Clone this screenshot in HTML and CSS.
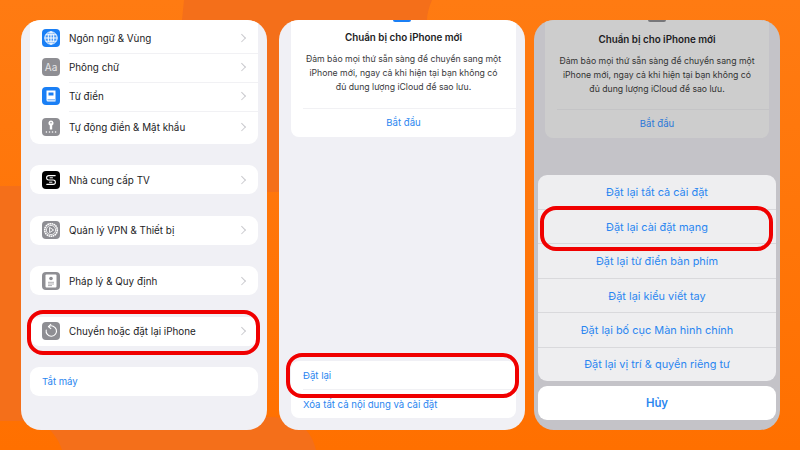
FILE: index.html
```html
<!DOCTYPE html>
<html>

<head>
    <title>Đặt lại cài đặt mạng</title>
    <meta name="viewport" content="width=device-width, initial-scale=1.0">
    <link rel="stylesheet" href="styles.css">
</head>

<body>
    <!-- Darker orange shapes behind the phones -->
    <svg class="backdrop" viewBox="0 0 800 450">
        <path d="M184 0H432C429 7 427 14 427 20V60H279V192H267V60H178Z" fill="#f46f1a"/>
        <path d="M0 186H30V421H0Z" fill="#f46f1a"/>
        <path d="M30 421H40C52 430 59 440 62 450H316C312 432 300 417 270 417H30Z" fill="#f46f1a"/>
    </svg>

    <main class="screens">
        <!-- Settings list -->
        <section class="phone">
            <div class="group group-first">
                <div class="row">
                    <span class="icon icon-blue">
                        <svg viewBox="0 0 18 18" fill="none" stroke="#fff" stroke-width="1">
                            <circle cx="9" cy="9" r="6.2" fill="#cfe3ff" fill-opacity=".25"/>
                            <ellipse cx="9" cy="9" rx="2.8" ry="6.2"/>
                            <path d="M9 2.8V15.2M2.8 9H15.2M3.8 5.8H14.2M3.8 12.2H14.2"/>
                        </svg>
                    </span>
                    <span class="label">Ngôn ngữ &amp; Vùng</span>
                    <span class="chevron"></span>
                </div>
                <div class="row">
                    <span class="icon icon-gray icon-text">Aa</span>
                    <span class="label">Phông chữ</span>
                    <span class="chevron"></span>
                </div>
                <div class="row">
                    <span class="icon icon-blue">
                        <svg viewBox="0 0 18 18">
                            <path d="M4.5 3.5H13.5V14.5H6A1.5 1.5 0 0 1 4.5 13Z" fill="#fff"/>
                            <path d="M6.5 5.5H11.5V8.5H6.5ZM5.5 12.5H13V13.3H5.5Z" fill="#1a7ff5"/>
                        </svg>
                    </span>
                    <span class="label">Từ điển</span>
                    <span class="chevron"></span>
                </div>
                <div class="row row-tall">
                    <span class="icon icon-gray">
                        <svg viewBox="0 0 18 18" fill="#fff">
                            <path d="M9 2.5A2.6 2.6 0 0 1 10.2 7.4V11.5H7.8V7.4A2.6 2.6 0 0 1 9 2.5Z"/>
                            <circle cx="9" cy="4.8" r=".8" fill="#8e8e93"/>
                            <circle cx="4.4" cy="14" r=".8"/>
                            <circle cx="7.5" cy="14" r=".8"/>
                            <circle cx="10.5" cy="14" r=".8"/>
                            <circle cx="13.6" cy="14" r=".8"/>
                        </svg>
                    </span>
                    <span class="label">Tự động điền &amp; Mật khẩu</span>
                    <span class="chevron"></span>
                </div>
            </div>

            <div class="group">
                <div class="row">
                    <span class="icon icon-black">
                        <svg viewBox="0 0 18 18" fill="none" stroke="#fff" stroke-linecap="round">
                            <path d="M13.2 4.6H6.8A2.2 2.2 0 0 0 6.8 9H11.2A2.2 2.2 0 0 1 11.2 13.4H4.8" stroke-width="1.1"/>
                            <path d="M8 6.8H10.5M7.5 11.2H10" stroke-width="1"/>
                        </svg>
                    </span>
                    <span class="label">Nhà cung cấp TV</span>
                    <span class="chevron"></span>
                </div>
            </div>

            <div class="group">
                <div class="row">
                    <span class="icon icon-gray">
                        <svg viewBox="0 0 18 18" fill="none" stroke="#fff">
                            <circle cx="9" cy="9" r="6.3" stroke-width="1.6" stroke-dasharray="1.6 .5"/>
                            <circle cx="9" cy="9" r="4.6" stroke-width=".8"/>
                            <path d="M7.6 6.4L11.6 9L7.6 11.6Z" stroke-width=".9" stroke-linejoin="round"/>
                        </svg>
                    </span>
                    <span class="label">Quản lý VPN &amp; Thiết bị</span>
                    <span class="chevron"></span>
                </div>
            </div>

            <div class="group">
                <div class="row">
                    <span class="icon icon-gray">
                        <svg viewBox="0 0 18 18">
                            <rect x="3.5" y="2.5" width="11" height="13" rx="1" fill="#fff"/>
                            <circle cx="9" cy="6.5" r="1.8" fill="#8e8e93"/>
                            <path d="M6 10.3H12M6 12H12M6 13.6H10" stroke="#8e8e93" stroke-width=".7"/>
                        </svg>
                    </span>
                    <span class="label">Pháp lý &amp; Quy định</span>
                    <span class="chevron"></span>
                </div>
            </div>

            <div class="group">
                <div class="row">
                    <span class="icon icon-gray">
                        <svg viewBox="0 0 18 18" fill="none" stroke="#fff" stroke-width="1.1" stroke-linecap="round" stroke-linejoin="round">
                            <path d="M6.6 4.6A5.2 5.2 0 1 1 4.2 8"/>
                            <path d="M8.8 2.4L6.4 4.6L8.8 6.6"/>
                        </svg>
                    </span>
                    <span class="label">Chuyển hoặc đặt lại iPhone</span>
                    <span class="chevron"></span>
                </div>
            </div>

            <div class="group">
                <div class="row"><span class="link">Tắt máy</span></div>
            </div>

            <div class="ring ring-transfer"></div>
        </section>

        <!-- Transfer or reset page -->
        <section class="phone phone-reset">
            <span class="app-tip"></span>
            <div class="prepare">
                <h2>Chuẩn bị cho iPhone mới</h2>
                <p>Đảm bảo mọi thứ sẵn sàng để chuyển sang một<br>iPhone mới, ngay cả khi hiện tại bạn không có<br>đủ dung lượng iCloud để sao lưu.</p>
                <div class="prepare-action">Bắt đầu</div>
            </div>
            <div class="reset-card">
                <div class="reset-row">Đặt lại</div>
                <div class="reset-row">Xóa tất cả nội dung và cài đặt</div>
            </div>
            <div class="ring ring-reset"></div>
        </section>

        <!-- Reset action sheet -->
        <section class="phone phone-reset phone-dim">
            <span class="app-tip"></span>
            <div class="prepare">
                <h2>Chuẩn bị cho iPhone mới</h2>
                <p>Đảm bảo mọi thứ sẵn sàng để chuyển sang một<br>iPhone mới, ngay cả khi hiện tại bạn không có<br>đủ dung lượng iCloud để sao lưu.</p>
                <div class="prepare-action">Bắt đầu</div>
            </div>
            <div class="sheet">
                <div class="sheet-list">
                    <div class="sheet-row">Đặt lại tất cả cài đặt</div>
                    <div class="sheet-row">Đặt lại cài đặt mạng</div>
                    <div class="sheet-row">Đặt lại từ điển bàn phím</div>
                    <div class="sheet-row">Đặt lại kiểu viết tay</div>
                    <div class="sheet-row">Đặt lại bố cục Màn hình chính</div>
                    <div class="sheet-row">Đặt lại vị trí &amp; quyền riêng tư</div>
                </div>
                <div class="sheet-cancel">Hủy</div>
            </div>
            <div class="ring ring-network"></div>
        </section>
    </main>
</body>

</html>
```
FILE: styles.css
```css
html,
body {
    margin: 0;
    height: 100%;
    font-family: Inter, "Liberation Sans", sans-serif;
    background: linear-gradient(180deg, #ff7b12 0%, #ff7000 100%);
    overflow: hidden;
}

.backdrop {
    position: absolute;
    left: 0;
    top: 0;
    width: 800px;
    height: 450px;
}

.screens {
    position: relative;
    display: flex;
    height: 410px;
    padding: 20px 0 20px 21px;
}

.phone {
    position: relative;
    flex: none;
    width: 246px;
    height: 410px;
    margin-right: 12px;
    background: #f0f0f5;
    border-radius: 20px;
    overflow: hidden;
}

.phone-dim {
    margin-left: -3px;
    background: #c4c3c8;
}

/* settings list */
.group {
    margin: 21.5px 9px 0;
    background: #fff;
    border-radius: 9px;
}

.group-first {
    margin-top: 0;
    padding-top: 3.5px;
    border-radius: 0 0 9px 9px;
}

.row {
    display: flex;
    align-items: center;
    height: 29px;
    padding: 0 12px;
    color: #1c1c1e;
    font-size: 9.85px;
}

.row-tall {
    height: 33px;
}

.group-first .row {
    position: relative;
}

.group-first .row + .row::before {
    content: "";
    position: absolute;
    left: 39px;
    right: 0;
    top: 0;
    border-top: 1px solid #f1f1f4;
}

.icon {
    flex: none;
    display: flex;
    align-items: center;
    justify-content: center;
    width: 18px;
    height: 18px;
    margin-right: 9px;
    border-radius: 4px;
}

.icon svg {
    display: block;
    width: 18px;
    height: 18px;
}

.icon-blue {
    background: #1a7ff5;
}

.icon-gray {
    background: #8e8e93;
}

.icon-black {
    background: #000;
}

.icon-text {
    color: #e6e6e8;
    font-size: 10px;
}

.label {
    flex: 1;
}

.chevron {
    width: 5.5px;
    height: 5.5px;
    margin-right: 2px;
    box-sizing: border-box;
    border-top: 1px solid #c9c9cd;
    border-right: 1px solid #c9c9cd;
    transform: rotate(45deg);
}

.link {
    color: #2a86f0;
    font-size: 9.6px;
}

/* reset page */
.app-tip {
    position: absolute;
    left: 122.5px;
    top: 0;
    width: 18px;
    height: 1.5px;
    transform: translateX(-50%);
    background: #1a7ff5;
    border-radius: 0 0 4px 4px;
}

.prepare {
    margin: 0 9px 0 12px;
    height: 117px;
    padding-top: 10px;
    box-sizing: border-box;
    background: #fff;
    border-radius: 0 0 8px 8px;
    text-align: center;
    color: #1c1c1e;
}

.prepare h2 {
    margin: 0;
    font-size: 9.8px;
    line-height: 16px;
    font-weight: 600;
}

.prepare p {
    margin: 6px 0 0;
    height: 56px;
    color: #3a3a3c;
    font-size: 8.7px;
    line-height: 14px;
}

.prepare-action {
    margin-left: 12px;
    padding-right: 12px;
    height: 29px;
    line-height: 28px;
    border-top: 1px solid #f1f1f4;
    color: #2a86f0;
    font-size: 9.6px;
}

.reset-card {
    position: absolute;
    left: 12px;
    right: 9px;
    bottom: 12px;
    background: #fff;
    border-radius: 8px;
    color: #2a86f0;
    font-size: 9.6px;
}

.reset-row {
    height: 28px;
    margin-left: 12px;
    line-height: 29px;
}

.reset-row + .reset-row {
    border-top: 1px solid #f1f1f4;
    line-height: 30px;
}

/* dimmed page with the action sheet */
.phone-dim .prepare {
    height: 118px;
    padding-top: 12px;
    margin: 0 11px;
    background: #cdcdcd;
}

.phone-dim .prepare p {
    height: 55px;
    color: #333;
}

.phone-dim .prepare-action {
    border-top-color: #c4c4c6;
    color: #2a78d8;
}

.phone-dim .app-tip {
    background: #77777a;
}

.sheet {
    position: absolute;
    left: 4px;
    right: 4px;
    bottom: 10px;
    color: #2a86f0;
    text-align: center;
}

.sheet-list {
    background: #eeeef0;
    border-radius: 9px;
    overflow: hidden;
}

.sheet-row {
    display: flex;
    align-items: center;
    justify-content: center;
    height: 34.4px;
    box-sizing: border-box;
    font-size: 10.95px;
}

.sheet-row + .sheet-row {
    border-top: 1px solid #d9d9dc;
}

.sheet-cancel {
    height: 34px;
    margin-top: 5px;
    line-height: 35px;
    background: #fff;
    border-radius: 9px;
    font-size: 11.4px;
    font-weight: 600;
}

/* red callouts */
.ring {
    position: absolute;
    box-sizing: border-box;
    width: 233px;
    height: 45px;
    border: 4px solid #f00000;
    border-radius: 16px;
}

.ring-transfer {
    left: 6px;
    top: 290px;
}

.ring-reset {
    left: 7px;
    top: 333px;
}

.ring-network {
    left: 6px;
    top: 186px;
}
```
